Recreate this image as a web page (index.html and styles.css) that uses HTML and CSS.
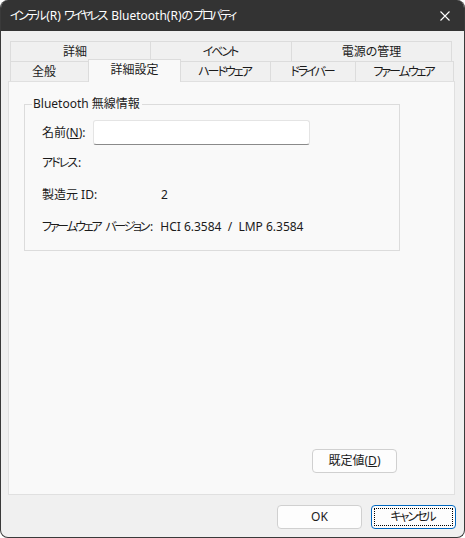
FILE: index.html
```html
<!DOCTYPE html>
<html lang="ja">
<head>
<meta charset="utf-8">
<title>プロパティ</title>
<link rel="stylesheet" href="styles.css">
</head>
<body>
<div class="window">
  <div class="titlebar">
    <span class="title"><span class="k">インテル</span>(R) <span class="k">ワイヤレス</span> Bluetooth(R)の<span class="k">プロパティ</span></span>
    <svg class="close" width="10" height="10" viewBox="0 0 10 10"><path d="M0.5 0.5 L9.5 9.5 M9.5 0.5 L0.5 9.5" stroke="#ffffff" stroke-width="1.1" fill="none"/></svg>
  </div>
  <div class="content">
    <div class="tabs">
      <div class="tab-row">
        <div class="tab first w140">詳細</div>
        <div class="tab w141"><span class="k">イベント</span></div>
        <div class="tab last w161">電源の管理</div>
      </div>
      <div class="tab-row">
        <div class="tab first w78">全般</div>
        <div class="tab selected">詳細設定</div>
        <div class="tab w90"><span class="k">ハードウェア</span></div>
        <div class="tab w85"><span class="k">ドライバー</span></div>
        <div class="tab last w99"><span class="k">ファームウェア</span></div>
      </div>
    </div>
    <div class="panel">
      <div class="group">
        <div class="legend">Bluetooth 無線情報</div>
        <div class="row row-name">
          <span class="label-name">名前(<u>N</u>):</span>
          <div class="input"></div>
        </div>
        <div class="row row-addr"><span class="k">アドレス</span>:</div>
        <div class="row row-maker">
          <span class="label-maker">製造元 ID:</span>
          <span>2</span>
        </div>
        <div class="row row-fw">
          <span class="label-fw"><span class="k">ファームウェア</span> <span class="k">バージョン</span>:</span>
          <span class="fw-value">HCI 6.3584  /  LMP 6.3584</span>
        </div>
      </div>
      <div class="panel-actions">
        <div class="btn btn-default">既定値(<u>D</u>)</div>
      </div>
    </div>
    <div class="footer">
      <div class="btn">OK</div>
      <div class="btn btn-focus"><span class="focus-ring"><span class="k">キャンセル</span></span></div>
    </div>
  </div>
</div>
</body>
</html>
```

FILE: styles.css
```css
* { box-sizing: border-box; }

html, body {
  margin: 0;
  padding: 0;
  background: #ffffff;
}

body {
  font-family: "Noto Sans", "Noto Sans CJK JP", sans-serif;
  font-size: 12px;
  line-height: 16px;
  color: #1b1b1b;
  font-feature-settings: "palt";
}

.k {
  letter-spacing: -2px;
  padding-right: 2px;
}

.window {
  width: 465px;
  height: 538px;
  border: 1px solid #3a3a3a;
  border-top: none;
  border-radius: 8px;
  overflow: hidden;
  background: #f0f0f0;
  display: flex;
  flex-direction: column;
}

.titlebar {
  height: 31px;
  flex: none;
  background: #333333;
  color: #ffffff;
  display: flex;
  align-items: center;
  padding: 0 9px 0 9px;
  margin: 0 -1px;
}

.title {
  flex: 1;
  padding-left: 1px;
  white-space: nowrap;
}

.title .k {
  letter-spacing: -2.3px;
}

.close {
  display: block;
  margin-right: 6px;
}

.content {
  flex: 1;
  display: flex;
  flex-direction: column;
  padding: 10px 9px 0 7px;
}

.tabs {
  margin-left: 2px;
}

.tab-row {
  display: flex;
  height: 20px;
  align-items: flex-start;
}

.tab {
  height: 20px;
  border-top: 1px solid #dcdcdc;
  border-left: 1px solid #dcdcdc;
  background: #f0f0f0;
  display: flex;
  align-items: center;
  justify-content: center;
  white-space: nowrap;
  padding-top: 1px;
}

.tab.first { padding-right: 11px; }
.tab.last { border-right: 1px solid #dcdcdc; }

.w140 { width: 140px; }
.w141 { width: 141px; }
.w161 { width: 161px; }
.w78 { width: 78px; }
.w90 { width: 90px; }
.w85 { width: 85px; }
.w99 { width: 99px; }

.tab.selected {
  width: 93px;
  height: 23px;
  margin-top: -2px;
  margin-right: -1px;
  border-right: 1px solid #dcdcdc;
  background: #f9f9f9;
  position: relative;
  z-index: 1;
  padding-top: 0;
  padding-bottom: 3px;
}

.panel {
  height: 414px;
  border: 1px solid #e0e0e0;
  background: #f9f9f9;
  display: flex;
  flex-direction: column;
}

.group {
  margin: 22px 0 0 15px;
  width: 376px;
  height: 147px;
  border: 1px solid #dcdcdc;
  padding: 0 0 0 17px;
}

.legend {
  width: fit-content;
  margin: -9px 0 0 -10px;
  padding: 0 2px 0 1px;
  background: #f9f9f9;
  height: 16px;
}

.row {
  display: flex;
  align-items: center;
  height: 16px;
  white-space: nowrap;
}

.row-name {
  height: 25px;
  margin-top: 8px;
}

.label-name {
  width: 51px;
  flex: none;
}

.input {
  width: 217px;
  height: 25px;
  background: #ffffff;
  border: 1px solid #e4e4e4;
  border-bottom: 1px solid #8a8a8a;
  border-radius: 3px;
}

.row-addr { margin-top: 10px; }
.row-maker { margin-top: 16px; }
.row-fw { margin-top: 16px; }

.label-maker {
  width: 119px;
  flex: none;
}

.label-fw {
  flex: none;
  margin-right: 7px;
}

.label-fw .k {
  letter-spacing: -2.3px;
}

.fw-value {
  white-space: pre;
}

.panel-actions {
  margin-top: auto;
  display: flex;
  justify-content: flex-end;
  padding: 0 57px 21px 0;
}

.btn {
  width: 85px;
  height: 24px;
  background: #fdfdfd;
  border: 1px solid #d0d0d0;
  border-radius: 4px;
  display: flex;
  align-items: center;
  justify-content: center;
  white-space: nowrap;
}

.footer {
  display: flex;
  justify-content: flex-end;
  gap: 9px;
  margin-top: 10px;
  margin-right: -1px;
}

.btn-focus {
  border-color: #0067c0;
  padding: 2px;
}

.focus-ring {
  flex: 1;
  align-self: stretch;
  display: flex;
  align-items: center;
  justify-content: center;
  outline: 1px dotted #000000;
  outline-offset: -1px;
}
```
